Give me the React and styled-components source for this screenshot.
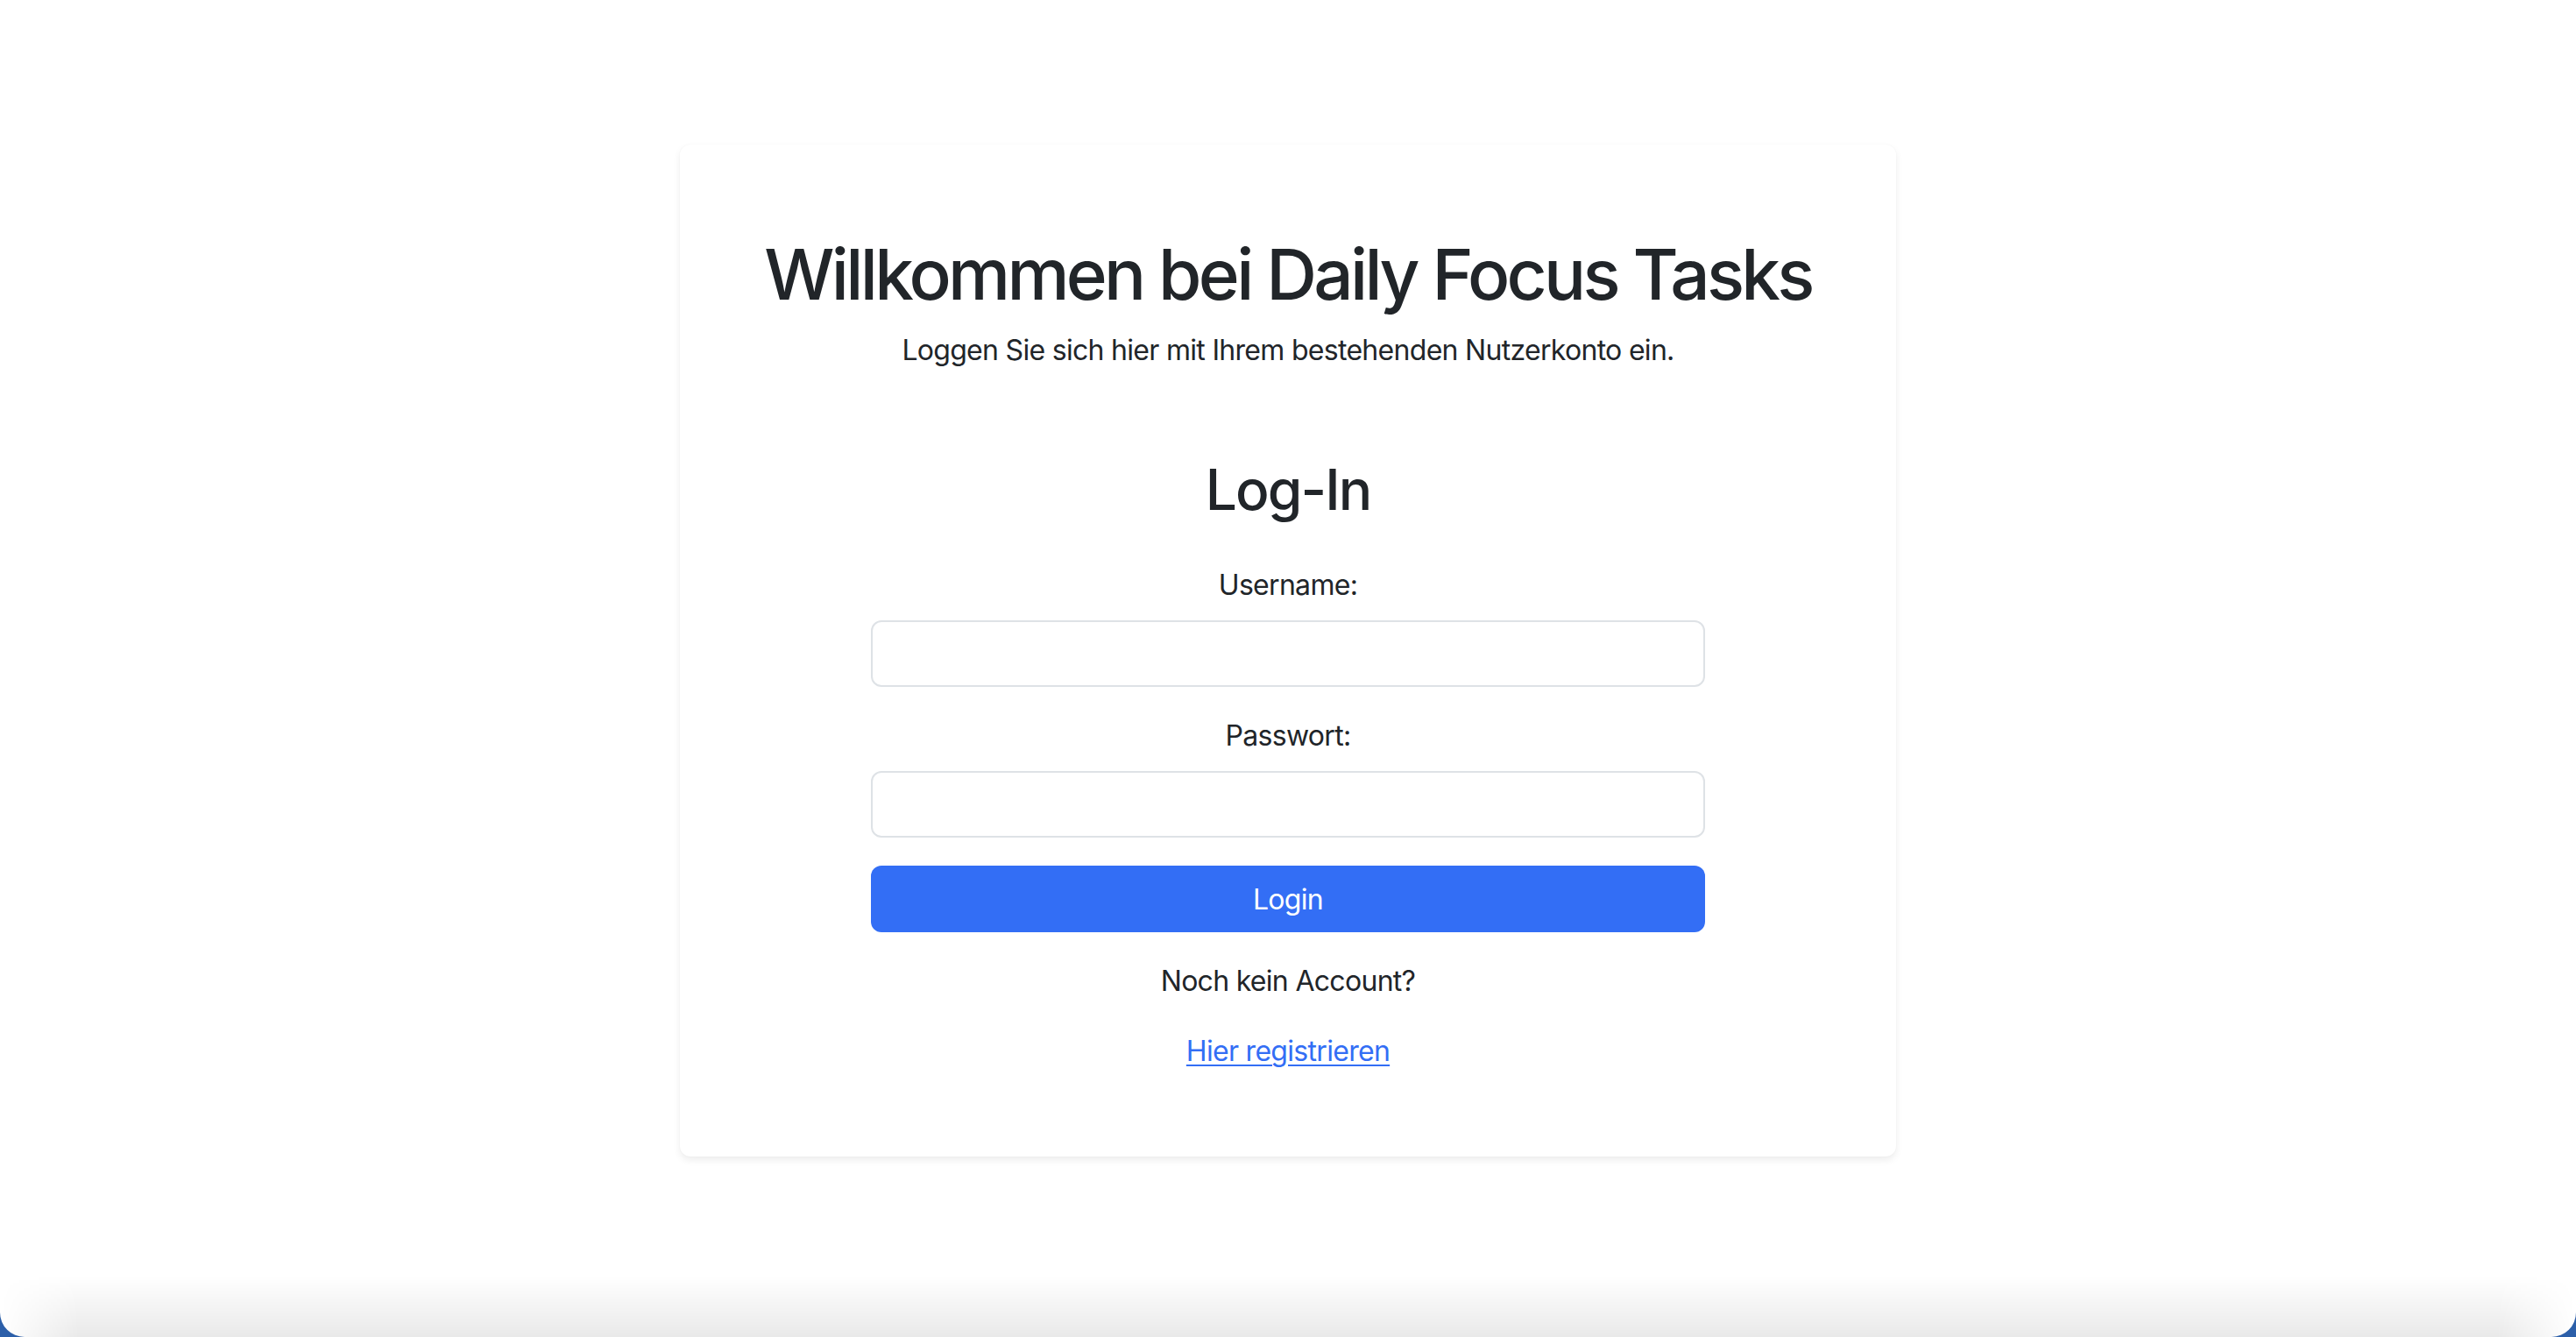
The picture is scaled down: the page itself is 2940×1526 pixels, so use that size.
import styled, { createGlobalStyle } from 'styled-components';

const GlobalStyle = createGlobalStyle`
  html, body {
    margin: 0;
    padding: 0;
    background: #2c5fa9;
  }
  * {
    box-sizing: border-box;
  }
`;

export default function App() {
    return (
        <>
            <GlobalStyle />
            <Window>
                <Main>
                    <Card>
                        <Title>Willkommen bei Daily Focus Tasks</Title>
                        <Lead>Loggen Sie sich hier mit Ihrem bestehenden Nutzerkonto ein.</Lead>
                        <FormTitle>Log-In</FormTitle>
                        <Form onSubmit={e => e.preventDefault()}>
                            <Field>
                                <Label htmlFor="username">Username:</Label>
                                <Input id="username" type="text" />
                            </Field>
                            <Field>
                                <Label htmlFor="password">Passwort:</Label>
                                <Input id="password" type="password" />
                            </Field>
                            <Button type="submit">Login</Button>
                        </Form>
                        <Text>Noch kein Account?</Text>
                        <RegisterLink href="#">Hier registrieren</RegisterLink>
                    </Card>
                </Main>
                <BottomShade />
            </Window>
        </>
    );
}

const Window = styled.div`
display: flex;
flex-direction: column;
height: 100vh;
background: #ffffff;
border-radius: 0 0 28px 28px;
overflow: hidden;
font-family: Inter, "Liberation Sans", sans-serif;
letter-spacing: -0.7px;
color: #212529;
`;

const Main = styled.main`
flex: 1;
display: flex;
justify-content: center;
align-items: flex-start;
padding-top: 165px;
`;

const BottomShade = styled.div`
height: 70px;
background: linear-gradient(to bottom, rgba(0, 0, 0, 0), rgba(0, 0, 0, 0.085));
-webkit-mask-image: linear-gradient(to right, transparent, #000 90px, #000 calc(100% - 90px), transparent);
mask-image: linear-gradient(to right, transparent, #000 90px, #000 calc(100% - 90px), transparent);
`;

const Card = styled.section`
width: 1388px;
display: flex;
flex-direction: column;
align-items: center;
padding: 100px 0 96px;
background: #ffffff;
border-radius: 12px;
box-shadow: 0 4px 8px rgba(0, 0, 0, 0.075), 0 0 2px rgba(0, 0, 0, 0.04);
text-align: center;
`;

const Title = styled.h1`
margin: 0 0 15px;
font-size: 80px;
font-weight: 500;
line-height: 96px;
letter-spacing: -3.7px;
`;

const Lead = styled.p`
margin: 0;
font-size: 32px;
line-height: 48px;
`;

const FormTitle = styled.h2`
margin: 96px 0 47px;
font-size: 64px;
font-weight: 500;
line-height: 77px;
letter-spacing: -1.9px;
`;

const Form = styled.form`
width: 952px;
display: flex;
flex-direction: column;
`;

const Field = styled.div`
display: flex;
flex-direction: column;
align-items: center;
margin-bottom: 32px;
`;

const Label = styled.label`
margin-bottom: 16px;
font-size: 32px;
line-height: 48px;
`;

const Input = styled.input`
width: 100%;
height: 76px;
padding: 12px 24px;
font: inherit;
font-size: 32px;
color: #212529;
background: #ffffff;
border: 2px solid #dee2e6;
border-radius: 12px;
outline: none;
`;

const Button = styled.button`
width: 100%;
height: 76px;
font: inherit;
font-size: 32px;
letter-spacing: -0.7px;
color: #ffffff;
background: #336ef5;
border: none;
border-radius: 12px;
cursor: pointer;
`;

const Text = styled.p`
margin: 32px 0 32px;
font-size: 32px;
line-height: 48px;
`;

const RegisterLink = styled.a`
font-size: 32px;
line-height: 48px;
color: #336ef5;
text-decoration: underline;
text-decoration-thickness: 2px;
text-underline-offset: 4px;
`;
